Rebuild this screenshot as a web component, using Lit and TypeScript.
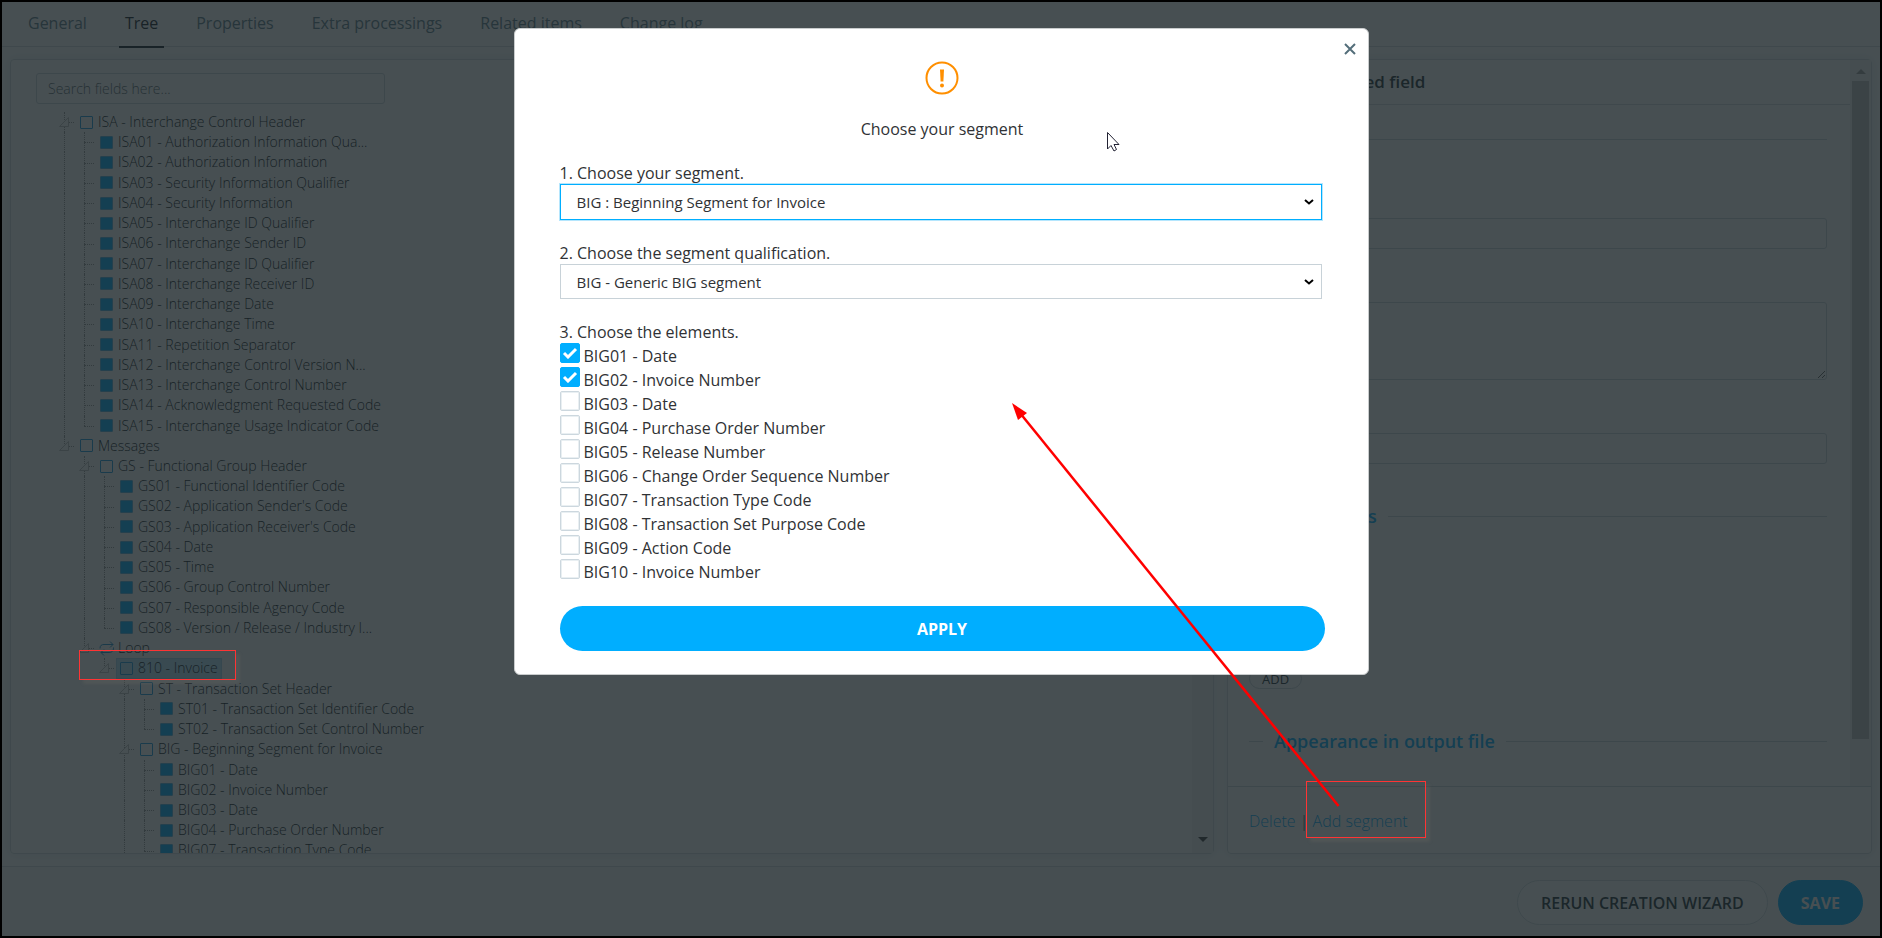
import { LitElement, html, css, svg } from "lit";
import { customElement, state } from "lit/decorators.js";
import { classMap } from "lit/directives/class-map.js";

interface TreeNode {
  label: string;
  kind?: "group" | "loop";
  selected?: boolean;
  open?: boolean;
  children?: TreeNode[];
}

interface Row {
  node: TreeNode;
  guides: string[];
}

const leaves = (items: string[]): TreeNode[] => items.map((label) => ({ label }));

const TREE: TreeNode[] = [
  {
    label: "ISA - Interchange Control Header",
    kind: "group",
    children: leaves([
      "ISA01 - Authorization Information Qua...",
      "ISA02 - Authorization Information",
      "ISA03 - Security Information Qualifier",
      "ISA04 - Security Information",
      "ISA05 - Interchange ID Qualifier",
      "ISA06 - Interchange Sender ID",
      "ISA07 - Interchange ID Qualifier",
      "ISA08 - Interchange Receiver ID",
      "ISA09 - Interchange Date",
      "ISA10 - Interchange Time",
      "ISA11 - Repetition Separator",
      "ISA12 - Interchange Control Version N...",
      "ISA13 - Interchange Control Number",
      "ISA14 - Acknowledgment Requested Code",
      "ISA15 - Interchange Usage Indicator Code",
    ]),
  },
  {
    label: "Messages",
    kind: "group",
    children: [
      {
        label: "GS - Functional Group Header",
        kind: "group",
        children: leaves([
          "GS01 - Functional Identifier Code",
          "GS02 - Application Sender's Code",
          "GS03 - Application Receiver's Code",
          "GS04 - Date",
          "GS05 - Time",
          "GS06 - Group Control Number",
          "GS07 - Responsible Agency Code",
          "GS08 - Version / Release / Industry I...",
        ]),
      },
      {
        label: "Loop",
        kind: "loop",
        children: [
          {
            label: "810 - Invoice",
            kind: "group",
            selected: true,
            children: [
              {
                label: "ST - Transaction Set Header",
                kind: "group",
                children: leaves([
                  "ST01 - Transaction Set Identifier Code",
                  "ST02 - Transaction Set Control Number",
                ]),
              },
              {
                label: "BIG - Beginning Segment for Invoice",
                kind: "group",
                open: true,
                children: leaves([
                  "BIG01 - Date",
                  "BIG02 - Invoice Number",
                  "BIG03 - Date",
                  "BIG04 - Purchase Order Number",
                  "BIG07 - Transaction Type Code",
                ]),
              },
            ],
          },
        ],
      },
    ],
  },
];

function flatten(nodes: TreeNode[], prefix: string[] = []): Row[] {
  return nodes.flatMap((node, i) => {
    const last = i === nodes.length - 1 && !node.open;
    return [
      { node, guides: [...prefix, last ? "end" : "tee"] },
      ...flatten(node.children ?? [], [...prefix, last ? "none" : "line"]),
    ];
  });
}

const ROWS = flatten(TREE);

const TABS = ["General", "Tree", "Properties", "Extra processings", "Related items", "Change log"];

const ELEMENTS = [
  "BIG01 - Date",
  "BIG02 - Invoice Number",
  "BIG03 - Date",
  "BIG04 - Purchase Order Number",
  "BIG05 - Release Number",
  "BIG06 - Change Order Sequence Number",
  "BIG07 - Transaction Type Code",
  "BIG08 - Transaction Set Purpose Code",
  "BIG09 - Action Code",
  "BIG10 - Invoice Number",
];

@customElement("field-tree")
class FieldTree extends LitElement {
  static styles = css`
    :host {
      display: block;
      overflow: hidden;
    }
    .rows {
      list-style: none;
      margin: 0;
      padding: 0 0 0 43px;
      font-size: 14px;
      font-weight: 300;
      line-height: 1.446;
      color: #10171b;
    }
    .row {
      display: flex;
      white-space: nowrap;
    }
    .guide {
      position: relative;
      width: 20px;
      flex: none;
    }
    .line::before,
    .tee::before,
    .end::before {
      content: "";
      position: absolute;
      left: 10px;
      top: 0;
      bottom: 0;
      border-left: 1px dotted #999;
    }
    .end::before {
      bottom: 50%;
    }
    .tee::after,
    .end::after {
      content: "";
      position: absolute;
      left: 10px;
      right: 0;
      top: 50%;
      border-top: 1px dotted #999;
    }
    .toggle {
      position: absolute;
      z-index: 1;
      left: 4px;
      top: 4px;
      display: block;
    }
    .item {
      display: flex;
      align-items: center;
      gap: 5px;
      padding: 0 4px;
      margin-left: 2px;
    }
    .selected {
      background: #b8e4fa;
      box-shadow: inset 0 0 0 1px #a9d6ee;
    }
    .box {
      box-sizing: border-box;
      width: 13px;
      height: 13px;
      border: 1px solid #1e9be0;
      border-radius: 1px;
    }
    .leaf {
      background: #00aeff;
      border-color: #56b5e4;
    }
    .loop {
      overflow: visible;
    }
  `;

  private marker(node: TreeNode) {
    if (node.kind === "loop") {
      return html`<svg class="loop" width="13" height="13" viewBox="0 0 13 13" fill="none" stroke="#1e8fd0">
        ${svg`<path d="M0 6.500C0 3.500 1.500 2.500 4 2.500H13M10 -.5L13 2.500L10 5.500M13.500 5.500C13.500 9.500 11.500 10.500 9 10.500H1M4 7.500L1 10.500L4 13.500"/>`}
      </svg>`;
    }
    return html`<span class=${classMap({ box: true, leaf: !node.kind })}></span>`;
  }

  render() {
    return html`<ul class="rows">
      ${ROWS.map(
        ({ node, guides }) => html`<li class="row">
          ${guides.map(
            (g, i) => html`<span class="guide ${g}"
              >${node.children && i === guides.length - 1
                ? html`<svg class="toggle" width="12" height="12" viewBox="0 0 12 12">
                    <path d="M1.500 10.500L10.500 1.500V10.500Z" fill="#fff" stroke="#c4c4c4" />
                  </svg>`
                : ""}</span
            >`
          )}
          <span class=${classMap({ item: true, selected: !!node.selected })}>${this.marker(node)}${node.label}</span>
        </li>`
      )}
    </ul>`;
  }
}

@customElement("segment-dialog")
class SegmentDialog extends LitElement {
  @state() private chosen = new Set([0, 1]);

  static styles = css`
    :host {
      display: block;
      position: relative;
      box-sizing: border-box;
      width: 855px;
      max-width: 100%;
      padding: 32px 43px 23px 45px;
      border: 1px solid #c9cccd;
      border-radius: 6px;
      background: #fff;
      color: #303235;
      font-size: 16px;
      line-height: 24px;
    }
    .close {
      position: absolute;
      top: 9px;
      right: 7px;
      padding: 5px;
      border: 0;
      background: none;
      line-height: 0;
    }
    .alert {
      display: block;
      margin: 0 auto;
    }
    .title {
      margin: 22px 0 21px;
      font: inherit;
      text-align: center;
    }
    .field {
      display: flex;
      flex-direction: column;
      margin: 0 3px 22px 0;
      line-height: 22px;
    }
    .select {
      appearance: none;
      box-sizing: border-box;
      width: 100%;
      height: 35px;
      padding: 0 16px;
      border: 1px solid #c8d2d8;
      border-radius: 0;
      background: #fff
        url("data:image/svg+xml,%3Csvg xmlns='http://www.w3.org/2000/svg' width='10' height='6'%3E%3Cpath d='M1 1l4 3.500 4-3.500' fill='none' stroke='%23000' stroke-width='2'/%3E%3C/svg%3E")
        no-repeat right 7px center;
      color: #303235;
      font: inherit;
      font-size: 15px;
    }
    .active {
      height: 36px;
      border-color: #00aeff;
      box-shadow: 0 0 0 1px #b5e6fd;
    }
    .elements {
      margin: 0;
      padding: 0;
      border: 0;
    }
    .legend {
      display: block;
      padding: 0;
      line-height: 22px;
    }
    .option {
      display: flex;
      gap: 4px;
      height: 24px;
    }
    .check {
      appearance: none;
      box-sizing: border-box;
      width: 20px;
      height: 20px;
      margin: 0;
      border: 1px solid #ccd7de;
      border-radius: 2px;
      box-shadow: inset 0 0 0 1px #e9eff2;
    }
    .check:checked {
      border-color: #00aeff;
      box-shadow: none;
      background: #00aeff
        url("data:image/svg+xml,%3Csvg xmlns='http://www.w3.org/2000/svg' width='16' height='12'%3E%3Cpath d='M2 6l4 4L14 2' fill='none' stroke='%23fff' stroke-width='3'/%3E%3C/svg%3E")
        no-repeat center;
    }
    .name {
      padding-top: 1px;
    }
    .apply {
      display: block;
      width: 100%;
      height: 45px;
      margin-top: 23px;
      border: 0;
      border-radius: 23px;
      background: #00aeff;
      color: #fff;
      font: inherit;
      font-weight: 700;
    }
  `;

  private toggle(i: number) {
    const next = new Set(this.chosen);
    next.has(i) ? next.delete(i) : next.add(i);
    this.chosen = next;
  }

  render() {
    return html`
      <button class="close" aria-label="Close">
        <svg width="12" height="12" viewBox="0 0 12 12">
          <path d="M1 1l10 10M11 1L1 11" stroke="#546e7a" stroke-width="2" />
        </svg>
      </button>
      <svg class="alert" width="34" height="34" viewBox="0 0 34 34">
        <circle cx="17" cy="17" r="15.500" fill="none" stroke="#ff8f00" stroke-width="2" />
        <path d="M15 8.500h4l-.6 12h-2.800z" fill="#ff8f00" />
        <circle cx="17" cy="24.500" r="2" fill="#ff8f00" />
      </svg>
      <h2 class="title">Choose your segment</h2>
      <div class="field">
        <label for="segment">1. Choose your segment.</label>
        <select id="segment" class="select active">
          <option>BIG : Beginning Segment for Invoice</option>
        </select>
      </div>
      <div class="field">
        <label for="qualification">2. Choose the segment qualification.</label>
        <select id="qualification" class="select">
          <option>BIG - Generic BIG segment</option>
        </select>
      </div>
      <fieldset class="elements">
        <legend class="legend">3. Choose the elements.</legend>
        ${ELEMENTS.map(
          (name, i) => html`<label class="option">
            <input class="check" type="checkbox" .checked=${this.chosen.has(i)} @change=${() => this.toggle(i)} />
            <span class="name">${name}</span>
          </label>`
        )}
      </fieldset>
      <button class="apply">APPLY</button>
    `;
  }
}

@customElement("app-root")
class AppRoot extends LitElement {
  static styles = css`
    :host {
      display: block;
      position: relative;
      box-sizing: border-box;
      height: 100vh;
      border: 2px solid #000;
      overflow: hidden;
      background: #fff;
      font-family: "Open Sans", "Noto Sans", sans-serif;
      font-size: 16px;
      color: #263238;
    }
    .page {
      display: flex;
      flex-direction: column;
      height: 100%;
    }
    .tabs {
      display: flex;
      gap: 26px;
      height: 44px;
      padding-left: 20px;
      border-bottom: 1px solid #d5dde1;
      flex: none;
    }
    .tab {
      padding: 0 6px;
      line-height: 42px;
      font-weight: 500;
      color: #607d8b;
      text-decoration: none;
    }
    .current {
      color: #17212a;
      box-shadow: 0 2px 0 #17212a;
      height: 44px;
    }
    .main {
      flex: 1;
      min-height: 0;
      display: grid;
      grid-template-columns: minmax(0, 1204fr) minmax(0, 645fr);
      gap: 13px;
      padding: 12px 8px;
    }
    .panel {
      display: flex;
      min-height: 0;
      border: 1px solid #d5dde1;
      border-radius: 4px;
      box-shadow: 0 0 12px #e4eaed;
    }
    .tree {
      flex: 1;
      min-width: 0;
      display: flex;
      flex-direction: column;
    }
    .search {
      box-sizing: border-box;
      flex: none;
      width: 349px;
      height: 31px;
      margin: 13px 0 8px 25px;
      padding: 0 11px;
      border: 1px solid #cbd5da;
      border-radius: 3px;
      background: none;
      font: inherit;
      font-size: 14px;
      font-weight: 300;
    }
    .search::placeholder {
      color: #58666c;
    }
    .grow {
      flex: 1;
      min-height: 0;
    }
    .scroll {
      width: 21px;
      flex: none;
      display: flex;
      flex-direction: column;
      align-items: center;
      background: #f5f5f5;
    }
    .up,
    .down {
      border: 5px solid transparent;
    }
    .up {
      margin: 4px 0 7px;
      border-bottom-color: #a0a0a0;
    }
    .down {
      margin: auto 0 6px;
      border-top-color: #404040;
    }
    .thumb {
      width: 17px;
      height: 658px;
      background: #c1c1c1;
    }
    .editor {
      flex-direction: column;
    }
    .content {
      flex: 1;
      min-height: 0;
      display: flex;
    }
    .form {
      flex: 1;
      min-width: 0;
      overflow: hidden;
    }
    .heading {
      margin: 0;
      padding-left: 21px;
      font-size: 17px;
      font-weight: 600;
      line-height: 44px;
      border-bottom: 1px solid #d5dde1;
    }
    .body {
      display: flex;
      flex-direction: column;
      align-items: flex-start;
      padding: 19px 23px 0 21px;
    }
    .section {
      align-self: stretch;
      display: flex;
      align-items: center;
      gap: 11px;
      margin: 0;
      font-size: 18px;
      font-weight: 600;
      line-height: 30px;
      color: #00aeff;
    }
    .section::before,
    .section::after {
      content: "";
      height: 1px;
      background: #cbd5da;
    }
    .section::before {
      width: 14px;
    }
    .section::after {
      flex: 1;
    }
    .label {
      margin-top: 31px;
      line-height: 22px;
    }
    .first {
      margin-top: 42px;
    }
    .input {
      align-self: stretch;
      box-sizing: border-box;
      height: 31px;
      border: 1px solid #cbd5da;
      border-radius: 3px;
      background: none;
    }
    .area {
      height: 78px;
    }
    .mid {
      margin-top: 37px;
    }
    .add {
      height: 21px;
      margin: 137px 0 37px;
      padding: 0 12px;
      border: 1px solid #cbd5da;
      border-radius: 11px;
      background: none;
      font: inherit;
      font-size: 13px;
      font-weight: 500;
      line-height: 18px;
      color: #263238;
    }
    .actions {
      padding: 17px 21px 0;
      height: 49px;
      line-height: 34px;
      font-weight: 300;
      border-top: 1px solid #cbd5da;
    }
    .link {
      color: #00aeff;
      text-decoration: none;
    }
    .footer {
      flex: none;
      display: flex;
      justify-content: flex-end;
      gap: 10px;
      height: 56px;
      padding: 13px 17px 0 0;
      border-top: 1px solid #d5dde1;
      background: #f7f9fa;
    }
    .button {
      height: 45px;
      padding: 0 23px;
      border: 1px solid #d5dde1;
      border-radius: 23px;
      background: #fff;
      color: #263238;
      font: inherit;
      font-weight: 600;
    }
    .primary {
      padding: 0 22px;
      border-color: #00aeff;
      background: #00aeff;
      color: #fff;
      font-weight: 700;
    }
    .overlay {
      position: absolute;
      inset: 0;
      z-index: 2;
      display: flex;
      justify-content: center;
      align-items: flex-start;
      padding-top: 26px;
      background: rgba(25, 35, 39, 0.8);
    }
    .marks {
      position: absolute;
      inset: -2px;
      z-index: 3;
      pointer-events: none;
    }
    .mark {
      position: absolute;
      box-sizing: border-box;
      border: 1px solid #ff3434;
      box-shadow: 4px 4px 3px rgba(120, 115, 105, 0.2);
    }
    .invoice {
      left: 79px;
      top: 650px;
      width: 157px;
      height: 30px;
    }
    .segment {
      left: 1306px;
      top: 781px;
      width: 120px;
      height: 57px;
    }
    .drawing {
      position: absolute;
      left: 0;
      top: 0;
    }
  `;

  render() {
    return html`
      <div class="page">
        <nav class="tabs">
          ${TABS.map(
            (t) => html`<a href="#" class=${classMap({ tab: true, current: t === "Tree" })}>${t}</a>`
          )}
        </nav>
        <main class="main">
          <section class="panel">
            <div class="tree">
              <input class="search" aria-label="Search fields" placeholder="Search fields here..." />
              <field-tree class="grow"></field-tree>
            </div>
            <div class="scroll"><span class="down"></span></div>
          </section>
          <section class="panel editor">
            <div class="content">
              <div class="form">
                <h2 class="heading">Edit the selected field</h2>
                <div class="body">
                  <h3 class="section">General</h3>
                  <label class="label first" for="name">Name</label>
                  <input class="input" id="name" />
                  <label class="label" for="description">Description</label>
                  <textarea class="input area" id="description"></textarea>
                  <label class="label" for="value">Value</label>
                  <input class="input" id="value" />
                  <h3 class="section mid">Restrictions</h3>
                  <button class="add">ADD</button>
                  <h3 class="section">Appearance in output file</h3>
                </div>
              </div>
              <div class="scroll"><span class="up"></span><span class="thumb"></span></div>
            </div>
            <div class="actions"><a class="link" href="#">Delete</a> | <a class="link" href="#">Add segment</a></div>
          </section>
        </main>
        <footer class="footer">
          <button class="button">RERUN CREATION WIZARD</button>
          <button class="button primary">SAVE</button>
        </footer>
      </div>
      <div class="overlay"><segment-dialog></segment-dialog></div>
      <div class="marks">
        <div class="mark invoice"></div>
        <div class="mark segment"></div>
        <svg class="drawing" width="1882" height="938" viewBox="0 0 1882 938">
          <path d="M1338.500 806L1020 413" stroke="#f00" stroke-width="2.500" />
          <path d="M1012 403L1027 413L1018 420Z" fill="#f00" />
          <path
            d="M1107.500 132.500V149L1111 145.500L1114 151L1116.500 149.500L1114 144.500H1119Z"
            fill="#fff"
            stroke="#223"
          />
        </svg>
      </div>
    `;
  }
}
